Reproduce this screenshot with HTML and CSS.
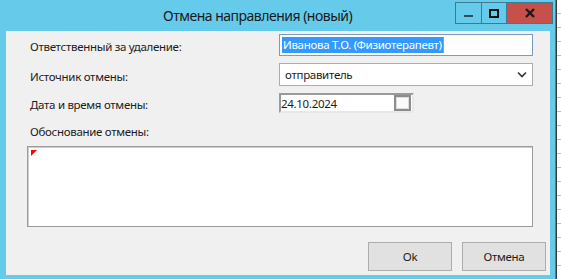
FILE: index.html
```html
<!DOCTYPE html>
<html lang="ru">
<head>
    <meta charset="UTF-8">
    <title>Отмена направления (новый)</title>
    <link rel="stylesheet" href="styles.css">
</head>
<body>
    <div class="desk">
        <div class="window">
            <div class="titlebar">
                <span class="title">Отмена направления (новый)</span>
                <div class="caption-btns">
                    <div class="cap cap-min"><span class="dash"></span></div>
                    <div class="cap cap-max"><span class="box"></span></div>
                    <div class="cap cap-close">
                        <svg width="12" height="10" viewBox="0 0 12 10">
                            <path d="M2 1 L10 9 M10 1 L2 9" stroke="#1a1a1a" stroke-width="2.4"/>
                        </svg>
                    </div>
                </div>
            </div>
            <div class="client">
                <div class="form">
                    <label class="lbl">Ответственный за удаление:</label>
                    <div class="field field-focus"><span class="sel">Иванова Т.О. (Физиотерапевт)</span><span class="caret"></span></div>

                    <label class="lbl">Источник отмены:</label>
                    <div class="field combo">
                        <span>отправитель</span>
                        <svg width="10" height="7" viewBox="0 0 10 7">
                            <path d="M1 1.5 L5 5.5 L9 1.5" fill="none" stroke="#333" stroke-width="1.6"/>
                        </svg>
                    </div>

                    <label class="lbl">Дата и время отмены:</label>
                    <div class="date">
                        <span>24.10.2024</span>
                        <span class="check"></span>
                    </div>
                </div>

                <div class="lbl lbl-note">Обоснование отмены:</div>
                <div class="memo"><span class="req"></span></div>

                <div class="buttons">
                    <button class="btn">Ok</button>
                    <button class="btn">Отмена</button>
                </div>
            </div>
        </div>
        <div class="behind"></div>
    </div>
</body>
</html>
```

FILE: styles.css
```css
body {
    margin: 0;
    background: #ffffff;
    font-family: "Noto Sans", "Open Sans", sans-serif;
    font-size: 11.5px;
    letter-spacing: -0.3px;
    color: #1b1b1b;
    overflow: hidden;
}
.desk {
    display: flex;
    height: 279px;
}
.window {
    width: 555px;
    height: 281px;
    background: #66cbea;
    border-right: 1px solid #4f7f93;
    flex-shrink: 0;
}
.titlebar {
    height: 31px;
    display: flex;
    align-items: flex-start;
}
.title {
    margin-left: 163px;
    margin-top: 6px;
    font-size: 14px;
    letter-spacing: -0.5px;
    color: #1a1a1a;
}
.caption-btns {
    display: flex;
    margin-left: auto;
    margin-top: 2px;
    margin-right: 2px;
}
.cap {
    height: 20px;
    border: 1px solid #3f7a90;
    display: flex;
    align-items: center;
    justify-content: center;
}
.cap-min {
    width: 25px;
}
.cap-max {
    width: 24px;
    border-left: none;
}
.cap-close {
    width: 45px;
    border-left: none;
    background: #c7514a;
}
.dash {
    width: 9px;
    height: 2px;
    background: #2a4f5d;
    margin-top: 5px;
}
.box {
    width: 6px;
    height: 5px;
    border: 2px solid #111;
}
.client {
    margin: 0 5px 0 6px;
    height: 244px;
    background: #f0f0f0;
    padding-top: 3px;
    box-sizing: border-box;
}
.form {
    display: grid;
    grid-template-columns: 249px 254px;
    grid-template-rows: 22px 23px 20px;
    row-gap: 7px;
    padding-left: 24px;
    align-items: center;
}
.lbl {
    line-height: 16px;
    padding-top: 4px;
}
.field {
    height: 100%;
    box-sizing: border-box;
    background: #fff;
    border: 1px solid #a9a9a9;
    display: flex;
    align-items: center;
}
.field-focus {
    border-color: #7a9cbf;
    padding-left: 2px;
}
.sel {
    background: #3399ff;
    color: #fff;
    line-height: 16px;
    padding: 0 1px;
}
.caret {
    width: 1px;
    height: 16px;
    background: #f08a24;
}
.combo {
    padding: 0 5px 0 5px;
    justify-content: space-between;
    border-color: #adadad;
}
.date {
    width: 135px;
    height: 20px;
    box-sizing: border-box;
    background: #fff;
    border-top: 2px solid #9a9a9a;
    border-left: 2px solid #9a9a9a;
    border-right: 2px solid #e8e8e8;
    border-bottom: 2px solid #e8e8e8;
    display: flex;
    align-items: center;
    justify-content: space-between;
    padding-right: 1px;
}
.check {
    width: 13px;
    height: 12px;
    border: 2px solid #8c8c8c;
    box-shadow: inset 0 0 0 1px #dcdcdc;
    background: #fafafa;
}
.lbl-note {
    padding-left: 24px;
    margin-top: 7px;
}
.memo {
    margin: 6px 17px 0 21px;
    height: 81px;
    box-sizing: border-box;
    background: #fff;
    border: 1px solid #9c9c9c;
    box-shadow: inset 1px 1px 0 #cfcfcf;
    padding: 3px;
}
.req {
    display: block;
    width: 0;
    height: 0;
    border-top: 6px solid #ff0000;
    border-right: 6px solid transparent;
}
.buttons {
    display: flex;
    justify-content: flex-end;
    gap: 10px;
    margin-top: 15px;
    padding-right: 4px;
}
.btn {
    width: 84px;
    height: 29px;
    background: #e1e1e1;
    border: 1px solid #adadad;
    font-family: "Noto Sans", "Open Sans", sans-serif;
    font-size: 11.5px;
    letter-spacing: -0.3px;
    color: #1b1b1b;
    padding: 0;
}
.behind {
    flex: 1;
    border-left: 1px solid #3a3a3a;
    background: repeating-linear-gradient(to bottom, #fff 0, #fff 13px, #bdbdbd 13px, #bdbdbd 14px);
}
```
